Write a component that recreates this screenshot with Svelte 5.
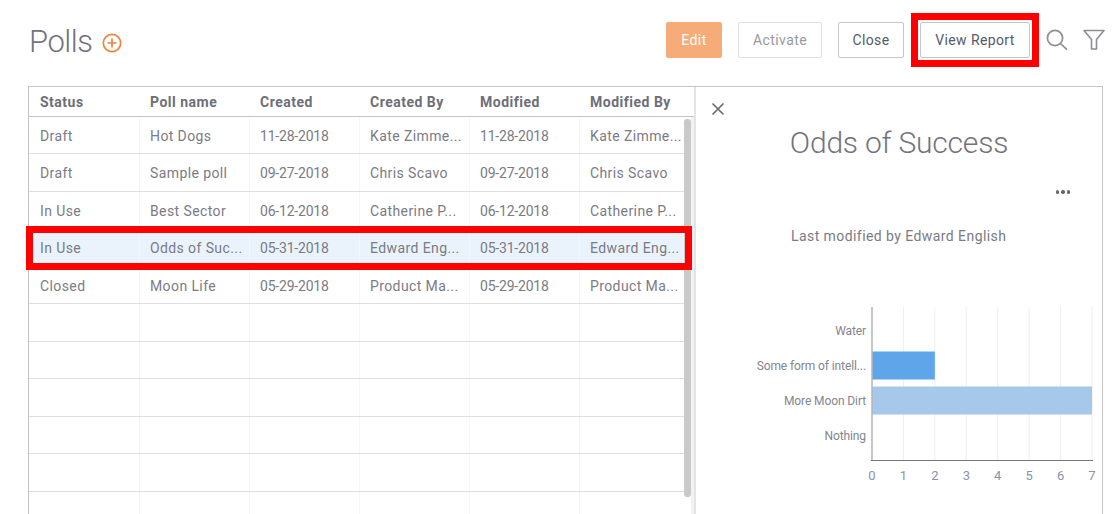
<script>
  const cols = ['Status', 'Poll name', 'Created', 'Created By', 'Modified', 'Modified By'];
  const rows = [
    ['Draft', 'Hot Dogs', '11-28-2018', 'Kate Zimme...', '11-28-2018', 'Kate Zimme...'],
    ['Draft', 'Sample poll', '09-27-2018', 'Chris Scavo', '09-27-2018', 'Chris Scavo'],
    ['In Use', 'Best Sector', '06-12-2018', 'Catherine P...', '06-12-2018', 'Catherine P...'],
    ['In Use', 'Odds of Suc...', '05-31-2018', 'Edward Eng...', '05-31-2018', 'Edward Eng...'],
    ['Closed', 'Moon Life', '05-29-2018', 'Product Ma...', '05-29-2018', 'Product Ma...'],
    ['', '', '', '', '', ''],
    ['', '', '', '', '', ''],
    ['', '', '', '', '', ''],
    ['', '', '', '', '', ''],
    ['', '', '', '', '', ''],
    ['', '', '', '', '', '']
  ];
  const selected = 3;

  const step = 220 / 7;
  const ticks = [0, 1, 2, 3, 4, 5, 6, 7];
  const answers = [
    { label: 'Water', y: 331, value: 0, color: '#5fa5ea' },
    { label: 'Some form of intell...', y: 366, value: 2, color: '#5fa5ea' },
    { label: 'More Moon Dirt', y: 401, value: 7, color: '#a6c8eb' },
    { label: 'Nothing', y: 436, value: 0, color: '#a6c8eb' }
  ];
</script>

<div class="page">
  <header class="top">
    <h1>Polls</h1>
    <svg class="add" width="20" height="20" viewBox="0 0 20 20" fill="none" stroke="#f0823c">
      <circle cx="10" cy="10" r="8.7" stroke-width="1.7" />
      <path d="M10 5.5v9M5.5 10h9" stroke-width="1.7" />
    </svg>
    <div class="actions">
      <button class="edit">Edit</button>
      <button class="activate">Activate</button>
      <button>Close</button>
      <span class="marked"><button>View Report</button></span>
      <svg class="search" width="22" height="22" viewBox="0 0 22 22" fill="none" stroke="#8e8e94" stroke-width="1.7">
        <circle cx="9" cy="9" r="7.6" />
        <path d="M14.5 14.5l6.5 6.2" />
      </svg>
      <svg width="22" height="22" viewBox="0 0 22 22" fill="none" stroke="#8e8e94" stroke-width="1.6">
        <path d="M1 1.5h20l-7.5 9v9.5h-5v-9.5z" stroke-linejoin="round" />
      </svg>
    </div>
  </header>

  <div class="frame">
    <section class="grid">
      <div class="row head">
        {#each cols as col}
          <div class="cell">{col}</div>
        {/each}
      </div>
      {#each rows as row, i}
        <div class="row" class:selected={i === selected}>
          {#each row as value, j}
            <div class="cell" class:date={j === 2 || j === 4}>{value}</div>
          {/each}
        </div>
      {/each}
      <div class="track"></div>
      <div class="thumb"></div>
    </section>

    <aside class="detail">
      <svg class="close" width="14" height="14" viewBox="0 0 14 14" stroke="#66666e" stroke-width="1.6">
        <path d="M1.5 1.5l11 11M12.5 1.5l-11 11" />
      </svg>
      <h2>Odds of Success</h2>
      <div class="more"><i></i><i></i><i></i></div>
      <p class="modified">Last modified by Edward English</p>
      <svg class="chart" width="408" height="200" viewBox="695 295 408 200">
        {#each ticks as t}
          {#if t > 0}
            <line x1={872 + t * step} x2={872 + t * step} y1="307" y2="460" stroke="#eeeef0" />
          {/if}
          <text class="tick" x={872 + t * step} y="480" text-anchor="middle">{t}</text>
        {/each}
        {#each answers as a}
          <text class="label" x="866" y={a.y + 4} text-anchor="end">{a.label}</text>
          {#if a.value}
            <rect x="872" y={a.y - 14.5} width={a.value * step} height="28" fill={a.color} />
          {/if}
        {/each}
        <line x1="872" x2="872" y1="307" y2="460" stroke="#b4b4ba" stroke-width="1.5" />
        <line x1="871" x2="1093" y1="460.5" y2="460.5" stroke="#77767f" />
      </svg>
    </aside>
  </div>
</div>

<style>
  :global(body) {
    margin: 0;
    background: #fff;
    font-family: Roboto, "Noto Sans", sans-serif;
    color: #7b7b84;
  }
  .page {
    height: 514px;
    overflow: hidden;
  }
  .top {
    height: 86px;
    box-sizing: border-box;
    padding: 22px 8px 0 29px;
    display: flex;
    align-items: flex-start;
  }
  h1 {
    margin: 0 9.5px 0 0;
    font-size: 31px;
    line-height: 40px;
    font-weight: 300;
    letter-spacing: -0.5px;
    color: #73737c;
  }
  .add {
    margin-top: 11px;
  }
  .actions {
    margin-left: auto;
    display: flex;
    align-items: center;
    height: 36px;
  }
  button {
    height: 36px;
    width: 66px;
    margin-right: 16px;
    padding: 0;
    box-sizing: border-box;
    background: #fff;
    border: 1px solid #c6c6c9;
    border-radius: 2px;
    font: 400 14px Roboto, sans-serif;
    letter-spacing: 0.4px;
    color: #555a66;
  }
  .edit {
    width: 56px;
    background: #f6ac78;
    border-color: #f6ac78;
    color: #fff;
  }
  .activate {
    width: 84px;
    border-color: #e0e0e2;
    color: #9a9aa0;
  }
  .marked {
    position: relative;
    display: block;
    height: 36px;
  }
  .marked button {
    display: block;
    width: 110px;
    margin: 0;
  }
  .marked::after {
    content: '';
    position: absolute;
    inset: -9px;
    border: 7px solid #f00;
  }
  .search {
    margin: 0 15px 0 16px;
  }
  .frame {
    margin-left: 28px;
    width: 1075px;
    height: 428px;
    box-sizing: border-box;
    border: 1px solid #c4c4c6;
    border-bottom: 0;
    display: flex;
  }
  .grid {
    position: relative;
    width: 665px;
    flex: none;
    overflow: visible;
  }
  .row {
    position: relative;
    display: grid;
    grid-template-columns: repeat(6, 110px);
    height: 37.5px;
    box-sizing: border-box;
    border-bottom: 1px solid #dedee0;
  }
  .head {
    height: 29.5px;
    border-bottom-color: #c4c4c6;
    font-weight: 700;
    color: #6e6e78;
  }
  .cell {
    min-width: 0;
    padding: 1px 0 0 10px;
    font-size: 14px;
    line-height: 36px;
    letter-spacing: 0.4px;
    border-left: 1px solid #f6f6f7;
    white-space: nowrap;
    overflow: hidden;
  }
  .cell:first-child {
    border-left-color: transparent;
  }
  .cell.date {
    letter-spacing: -0.2px;
  }
  .head .cell {
    line-height: 28px;
    letter-spacing: 0.5px;
    border-left-color: transparent;
  }
  .selected {
    background: #eaf3fb;
  }
  .selected::after {
    content: '';
    position: absolute;
    z-index: 2;
    left: -3px;
    right: 2px;
    top: -3px;
    bottom: -4.5px;
    border: 7px solid #f00;
  }
  .track {
    position: absolute;
    left: 662px;
    top: 30px;
    bottom: 0;
    width: 3px;
    background: #f2f2f2;
  }
  .thumb {
    position: absolute;
    left: 655px;
    top: 32px;
    width: 7px;
    height: 378px;
    background: #c9c9c9;
    border-radius: 3px;
  }
  .detail {
    position: relative;
    flex: 1;
    border-left: 2px solid #e4e4e6;
    box-sizing: border-box;
    min-width: 0;
  }
  .close {
    position: absolute;
    left: 15px;
    top: 15px;
  }
  h2 {
    margin: 0;
    padding-top: 36px;
    text-align: center;
    font-size: 30px;
    line-height: 40px;
    font-weight: 300;
    letter-spacing: -0.2px;
    color: #73737c;
  }
  .more {
    display: flex;
    gap: 2px;
    justify-content: flex-end;
    padding: 27px 32px 0 0;
  }
  .more i {
    width: 3.5px;
    height: 3.5px;
    border-radius: 50%;
    background: #66666e;
  }
  .modified {
    margin: 32px 0 0 95px;
    font-size: 14px;
    line-height: 20px;
    letter-spacing: 0.43px;
  }
  .chart {
    position: absolute;
    left: -1px;
    top: 208px;
  }
  .tick {
    font-size: 13px;
    fill: #8d93a8;
  }
  .label {
    font-size: 12px;
    letter-spacing: -0.1px;
    fill: #85858d;
  }
</style>
